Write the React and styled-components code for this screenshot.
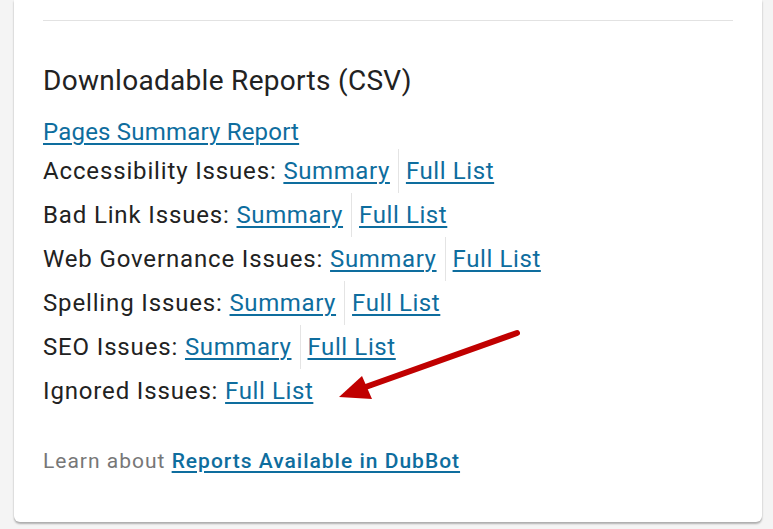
import React from 'react'
import styled, { createGlobalStyle } from 'styled-components'

const Global = createGlobalStyle`
body {
margin: 0;
background: #f4f4f4;
font-family: Roboto, "Liberation Sans", sans-serif;
}
`
const Page = styled.div`
padding: 0 11px 7px 14px;
`
const Card = styled.section`
position: relative;
background: #fff;
border-radius: 0 0 6px 6px;
box-shadow: 0 2px 2px rgba(0,0,0,0.28), 0 0 2px rgba(0,0,0,0.08);
padding: 20px 29px 0 29px;
height: 502px;
`
const Divider = styled.hr`
margin: 0;
border: 0;
border-top: 1px solid #e2e2e2;
`
const Heading = styled.h2`
margin: 42px 0 0;
font-size: 28px;
font-weight: 400;
letter-spacing: 0.3px;
line-height: 36px;
color: #222;
`
const List = styled.div`
margin-top: 16px;
display: flex;
flex-direction: column;
`
const Row = styled.div`
display: flex;
align-items: center;
height: ${(props) => props.first ? '34px' : '44px'};
font-size: 24px;
letter-spacing: 0.85px;
color: #222;
white-space: pre;
`
const Link = styled.a`
color: #0e6d9e;
letter-spacing: ${(props) => props.wide ? '0.2px' : '0.6px'};
text-decoration: underline;
text-underline-offset: 3px;
text-decoration-thickness: 1.5px;
cursor: pointer;
${(props) => props.split && `
border-left: 1px solid #e4e4e4;
margin-left: 8px;
padding-left: 7px;
align-self: stretch;
display: flex;
align-items: center;
`}
`
const Footer = styled.p`
margin: 36px 0 0;
font-size: 21px;
letter-spacing: 1px;
color: #777;
`
const FooterLink = styled.a`
color: #0e6d9e;
font-weight: 500;
text-decoration: underline;
text-underline-offset: 3px;
cursor: pointer;
`
const Arrow = styled.svg`
position: absolute;
left: 0;
top: 0;
pointer-events: none;
`

const rows = [
    { label: 'Accessibility Issues: ', summary: true },
    { label: 'Bad Link Issues: ', summary: true },
    { label: 'Web Governance Issues: ', summary: true },
    { label: 'Spelling Issues: ', summary: true },
    { label: 'SEO Issues: ', summary: true },
    { label: 'Ignored Issues: ', summary: false },
]

export default function App() {
    return (
        <Page>
            <Global />
            <Card>
                <Divider />
                <Heading>Downloadable Reports (CSV)</Heading>
                <List>
                    <Row first><Link wide>Pages Summary Report</Link></Row>
                    {rows.map((r) => (
                        <Row key={r.label}>
                            {r.label}
                            {r.summary && <Link>Summary</Link>}
                            <Link split={r.summary}>Full List</Link>
                        </Row>
                    ))}
                </List>
                <Footer>Learn about <FooterLink>Reports Available in DubBot</FooterLink></Footer>
                <Arrow width="748" height="502" viewBox="14 0 748 502">
                    <line x1="517" y1="333" x2="360" y2="389" stroke="#c00000" strokeWidth="6" strokeLinecap="round" />
                    <polygon points="339,397 362,376 372,399" fill="#c00000" />
                </Arrow>
            </Card>
        </Page>
    )
}
